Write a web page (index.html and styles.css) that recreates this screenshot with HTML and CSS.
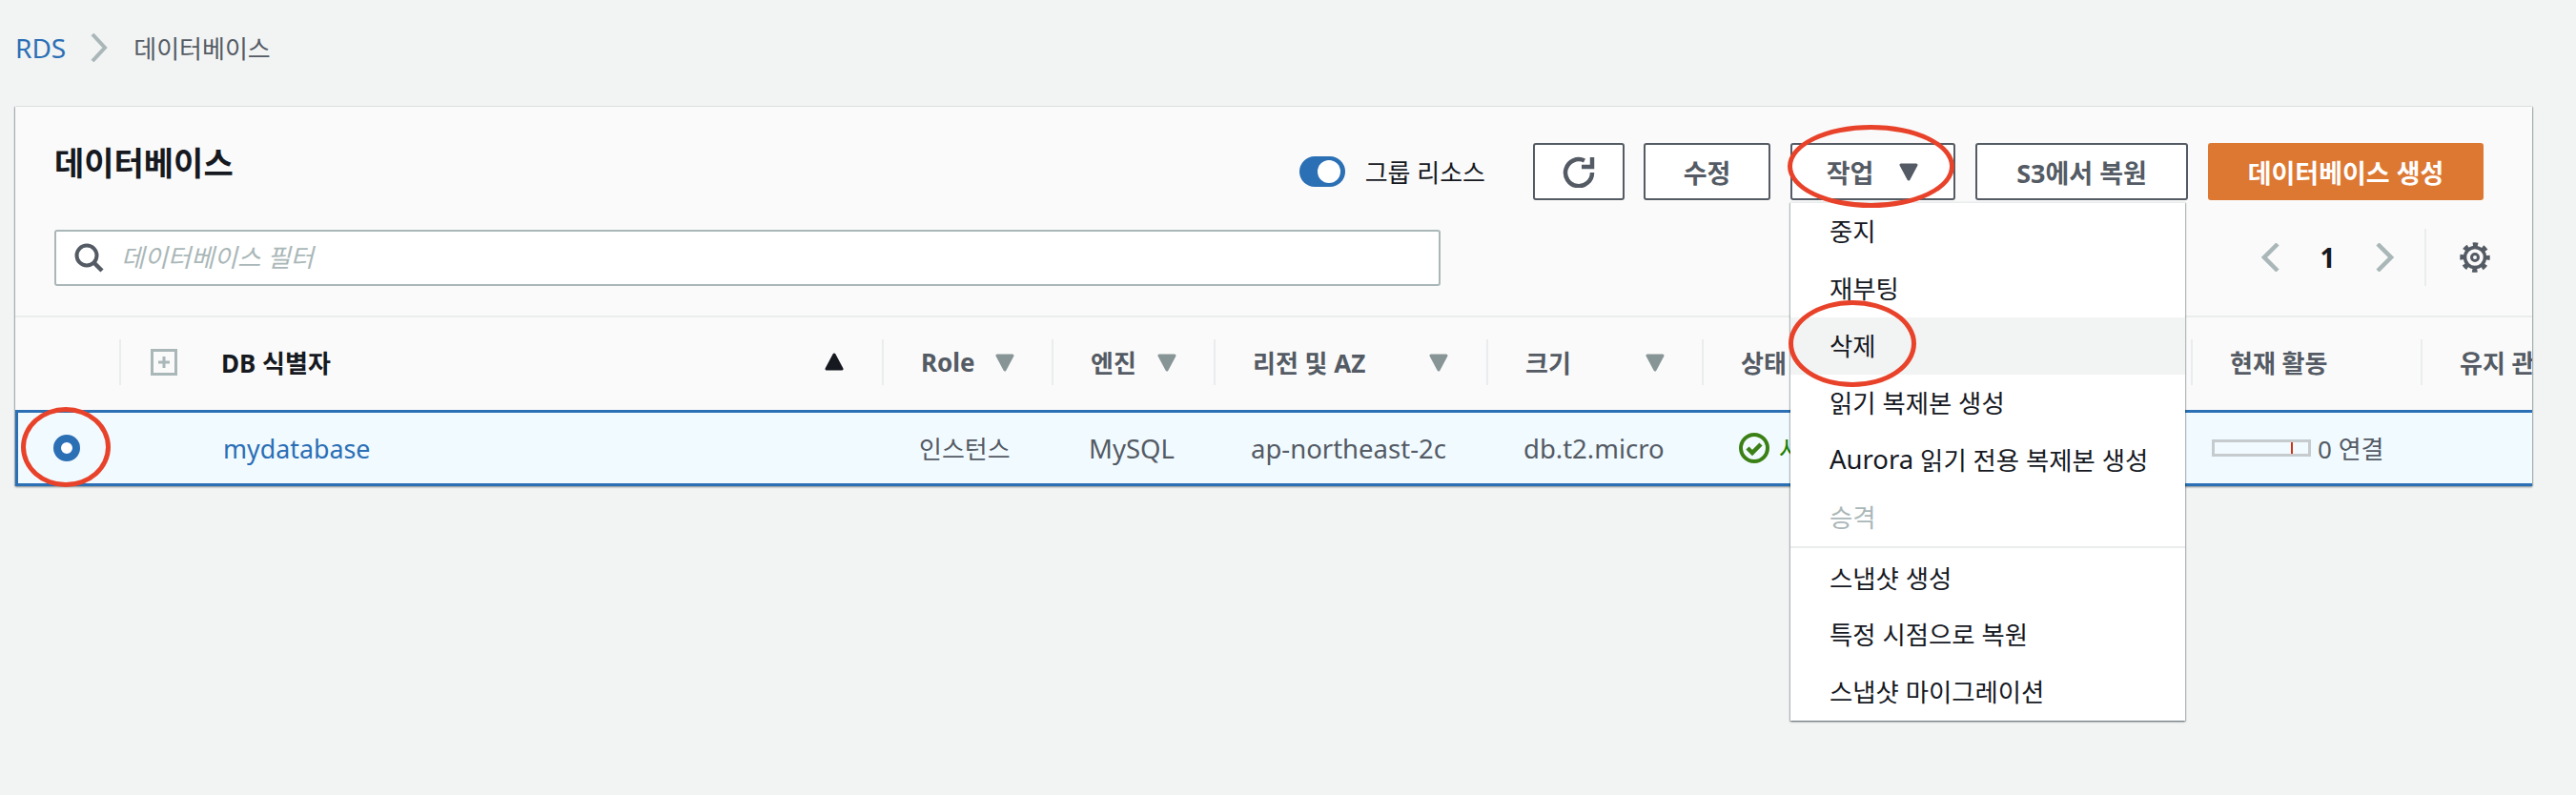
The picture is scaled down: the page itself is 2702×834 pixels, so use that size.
FILE: index.html
```html
<!DOCTYPE html>
<html lang="ko">
<head>
  <meta charset="UTF-8">
  <title>데이터베이스</title>
  <link rel="stylesheet" href="styles.css">
</head>
<body>
<svg class="defs" width="0" height="0">
  <symbol id="caret" viewBox="0 0 22 20"><path d="M3 3h16l-8 15z" fill="currentColor" stroke="currentColor" stroke-width="3" stroke-linejoin="round"/></symbol>
</svg>

<div class="crumbs">
  <a class="crumb-link" href="#">RDS</a>
  <svg class="crumb-arrow" width="18" height="30" viewBox="0 0 18 30"><path d="M2 1l13 14L2 29" fill="none" stroke="#aab7b8" stroke-width="4"/></svg>
  <span class="crumb-now">데이터베이스</span>
</div>

<div class="panel">
  <div class="head">
    <div class="head-top">
      <h1 class="title">데이터베이스</h1>
      <div class="toggle"><span class="toggle-knob"></span></div>
      <span class="toggle-label">그룹 리소스</span>
      <button class="btn btn-refresh">
        <svg width="34" height="34" viewBox="0 0 34 34"><path d="M23 5.5A14 14 0 1 0 31 18" fill="none" stroke="#545b64" stroke-width="4.5"/><path d="M31 2v10H20" fill="none" stroke="#545b64" stroke-width="4.5"/></svg>
      </button>
      <button class="btn btn-edit">수정</button>
      <div class="action">
        <button class="btn btn-action">작업<svg class="caret-dark"><use href="#caret"/></svg></button>
        <ul class="menu">
          <li>중지</li>
          <li>재부팅</li>
          <li class="hover">삭제</li>
          <li>읽기 복제본 생성</li>
          <li><span class="menu-latin">Aurora</span>&nbsp;읽기 전용 복제본 생성</li>
          <li class="off">승격</li>
          <li class="sep">스냅샷 생성</li>
          <li>특정 시점으로 복원</li>
          <li>스냅샷 마이그레이션</li>
        </ul>
      </div>
      <button class="btn btn-s3">S3에서 복원</button>
      <button class="btn btn-create">데이터베이스 생성</button>
    </div>
    <div class="head-bottom">
      <div class="search">
        <svg width="31" height="31" viewBox="0 0 31 31"><circle cx="13" cy="13" r="10.5" fill="none" stroke="#545b64" stroke-width="4"/><path d="M20 20l9 9" stroke="#545b64" stroke-width="4.5"/></svg>
        <input class="search-input" placeholder="데이터베이스 필터">
      </div>
      <div class="pager">
        <svg width="19" height="30" viewBox="0 0 19 30"><path d="M17 1L3 15l14 14" fill="none" stroke="#aab7b8" stroke-width="4.5"/></svg>
        <span class="page-num">1</span>
        <svg width="19" height="30" viewBox="0 0 19 30"><path d="M2 1l14 14L2 29" fill="none" stroke="#aab7b8" stroke-width="4.5"/></svg>
        <span class="pager-line"></span>
        <svg width="34" height="34" viewBox="0 0 34 34"><circle cx="17" cy="17" r="10.5" fill="none" stroke="#545b64" stroke-width="3.5"/><circle cx="17" cy="17" r="13.5" fill="none" stroke="#545b64" stroke-width="4.5" stroke-dasharray="5.3 5.3" stroke-dashoffset="2.6"/><circle cx="17" cy="17" r="3.5" fill="none" stroke="#545b64" stroke-width="3"/></svg>
      </div>
    </div>
  </div>

  <div class="table">
    <div class="tr tr-head">
      <div class="cell"></div>
      <div class="cell th th-id">
        <svg class="expand" width="28" height="28" viewBox="0 0 28 28"><rect x="1.5" y="1.5" width="25" height="25" fill="#fafafa" stroke="#aab7b8" stroke-width="3"/><path d="M14 8v12M8 14h12" stroke="#aab7b8" stroke-width="3"/></svg>
        <span class="th-dark">DB 식별자</span>
        <svg class="caret caret-up"><use href="#caret"/></svg>
      </div>
      <div class="cell th">Role<svg class="caret caret-role"><use href="#caret"/></svg></div>
      <div class="cell th">엔진<svg class="caret caret-engine"><use href="#caret"/></svg></div>
      <div class="cell th">리전 및 AZ<svg class="caret caret-region"><use href="#caret"/></svg></div>
      <div class="cell th">크기<svg class="caret caret-size"><use href="#caret"/></svg></div>
      <div class="cell th">상태</div>
      <div class="cell th">현재 활동</div>
      <div class="cell th">유지 관리</div>
    </div>
    <div class="tr tr-row">
      <div class="cell cell-radio"><span class="radio"></span></div>
      <div class="cell cell-id"><a class="db-link" href="#">mydatabase</a></div>
      <div class="cell">인스턴스</div>
      <div class="cell latin">MySQL</div>
      <div class="cell latin">ap-northeast-2c</div>
      <div class="cell latin">db.t2.micro</div>
      <div class="cell cell-status">
        <svg width="32" height="32" viewBox="0 0 32 32"><circle cx="16" cy="16" r="14" fill="none" stroke="#3b8015" stroke-width="4"/><path d="M9 16l5 5 9-9" fill="none" stroke="#3b8015" stroke-width="4.5"/></svg>
        <span>사용 가능</span>
      </div>
      <div class="cell cell-activity"><span class="bar"><span class="bar-tick"></span></span>0 연결</div>
      <div class="cell"></div>
    </div>
  </div>
</div>

<!-- 빨간 표시 -->
<span class="mark mark-action"></span>
<span class="mark mark-delete"></span>
<span class="mark mark-radio"></span>
</body>
</html>
```
FILE: styles.css
```css
* {
  padding: 0;
  margin: 0;
  box-sizing: border-box;
  list-style: none;
}

body {
  background: #f2f3f3;
  color: #16191f;
  font-family: "Noto Sans", "Noto Sans CJK KR", sans-serif;
  font-size: 26px;
  height: 834px;
  overflow: hidden;
  position: relative;
}

.defs {
  position: absolute;
}

a {
  color: #2b6fb5;
  text-decoration: none;
}

.crumbs {
  height: 100px;
  padding-left: 16px;
  display: flex;
  align-items: center;
}

.crumb-link {
  font-size: 28px;
}

.crumb-arrow {
  margin: 0 27px 0 26px;
}

.crumb-now {
  color: #545b64;
  font-size: 26px;
}

.panel {
  margin: 12px 46px 0 16px;
  background: #fafafa;
  box-shadow: 0 1px 2px rgba(0, 28, 36, .45), 1px 0 1px rgba(0, 28, 36, .2), -1px 0 1px rgba(0, 28, 36, .2);
}

.head {
  height: 219px;
  padding: 38px 51px 0 41px;
}

.head-top {
  display: flex;
  align-items: center;
  height: 60px;
}

.title {
  font-size: 34px;
  font-weight: 700;
  margin: 0 auto 22px 0;
}

.toggle {
  width: 48px;
  height: 32px;
  border-radius: 16px;
  background: #2b6fb5;
  display: flex;
  align-items: center;
  justify-content: flex-end;
  padding-right: 5px;
}

.toggle-knob {
  width: 24px;
  height: 24px;
  border-radius: 50%;
  background: #fff;
}

.toggle-label {
  margin: 0 50px 0 21px;
  color: #16191f;
}

.btn {
  height: 60px;
  border: 2px solid #545b64;
  border-radius: 3px;
  background: #fff;
  color: #545b64;
  font: 700 27px "Noto Sans", "Noto Sans CJK KR", sans-serif;
  display: flex;
  align-items: center;
  justify-content: center;
}

.btn-refresh {
  width: 96px;
  margin-right: 20px;
}

.btn-edit {
  width: 133px;
  margin-right: 21px;
}

.btn-action {
  width: 173px;
  gap: 26px;
}

.caret-dark {
  width: 22px;
  height: 20px;
  color: #545b64;
}

.btn-s3 {
  width: 223px;
  margin: 0 21px;
}

.btn-create {
  width: 289px;
  background: #dd7833;
  border-color: #dd7833;
  color: #fff;
}

.action {
  position: relative;
}

.menu {
  position: absolute;
  z-index: 5;
  top: 62px;
  left: 0;
  width: 414px;
  background: #fff;
  font-size: 26.4px;
  border-top: 1px solid #eaeded;
  box-shadow: 0 1px 2px rgba(0, 28, 36, .5), 1px 1px 1px rgba(0, 28, 36, .15), -1px 1px 1px rgba(0, 28, 36, .15);
}

.menu li {
  height: 60px;
  padding: 0 0 3px 41px;
  display: flex;
  align-items: center;
  white-space: nowrap;
}

.menu-latin {
  font-size: 27.5px;
}

.menu .hover {
  background: #f2f3f3;
}

.menu .off {
  color: #aab7b8;
}

.menu .sep {
  height: 63px;
  padding-top: 3px;
  border-top: 2px solid #eaeded;
}

.head-bottom {
  display: flex;
  align-items: center;
  margin-top: 30px;
}

.search {
  width: 1454px;
  height: 59px;
  border: 2px solid #aab7b8;
  border-radius: 3px;
  background: #fff;
  display: flex;
  align-items: center;
  padding-left: 19px;
  gap: 18px;
}

.search-input {
  flex: 1;
  border: 0;
  outline: 0;
  font: italic 26.5px "Noto Sans", "Noto Sans CJK KR", sans-serif;
}

.search-input::placeholder {
  color: #aab7b8;
}

.pager {
  margin: 0 -8px 0 auto;
  display: flex;
  align-items: center;
}

.page-num {
  width: 101px;
  text-align: center;
  font-weight: 700;
  font-size: 28px;
}

.pager-line {
  width: 2px;
  height: 60px;
  background: #eaeded;
  margin: 0 34px 0 32px;
}

.table {
  overflow: hidden;
}

.tr {
  display: grid;
  grid-template-columns: 109px 800px 178px 170px 286px 226px 513px 241px 117px;
}

.tr-head {
  height: 99px;
  border-top: 2px solid #eaeded;
  padding-bottom: 4px;
}

.tr-row {
  height: 80px;
  background: #f1faff;
  border: 3px solid #2b6fb5;
  border-right: 0;
  color: #545b64;
  grid-template-columns: 106px 800px 178px 170px 286px 226px 513px 241px 117px;
}

.cell {
  display: flex;
  align-items: center;
  padding-left: 39px;
  white-space: nowrap;
  overflow: hidden;
}

.latin {
  font-size: 27.5px;
}

.th {
  margin: 23px 0;
  height: 48px;
  border-left: 2px solid #eaeded;
  color: #545b64;
  font-weight: 700;
}

.th-id {
  padding-left: 31px;
}

.th-dark {
  color: #16191f;
  margin-left: 46px;
}

.expand {
  flex: none;
}

.caret {
  width: 22px;
  height: 20px;
  flex: none;
  color: #879596;
}

.caret-up {
  color: #16191f;
  transform: rotate(180deg);
  margin-left: 517px;
}

.caret-role {
  margin-left: 20px;
}

.caret-engine {
  margin-left: 21px;
}

.caret-region {
  margin-left: 66px;
}

.caret-size {
  margin-left: 77px;
}

.cell-radio {
  padding-left: 37px;
}

.radio {
  width: 28px;
  height: 28px;
  border-radius: 50%;
  border: 8px solid #2b6fb5;
  background: #fff;
}

.cell-id {
  padding-left: 109px;
  font-size: 26.8px;
}

.cell-status {
  color: #1d8102;
  gap: 10px;
}

.cell-activity {
  padding-left: 22px;
  gap: 7px;
}

.bar {
  width: 104px;
  height: 18px;
  border: 3px solid #c6cbce;
  padding-left: 80px;
  display: flex;
}

.bar-tick {
  width: 2px;
  background: #d13212;
}

/* 스크린샷 위에 그려진 표시 */
.mark {
  position: absolute;
  z-index: 9;
  border: 5px solid #e8432a;
  border-radius: 50%;
}

.mark-action {
  left: 1875px;
  top: 131px;
  width: 175px;
  height: 87px;
}

.mark-delete {
  left: 1876px;
  top: 315px;
  width: 134px;
  height: 91px;
}

.mark-radio {
  left: 22px;
  top: 427px;
  width: 94px;
  height: 84px;
}
```
